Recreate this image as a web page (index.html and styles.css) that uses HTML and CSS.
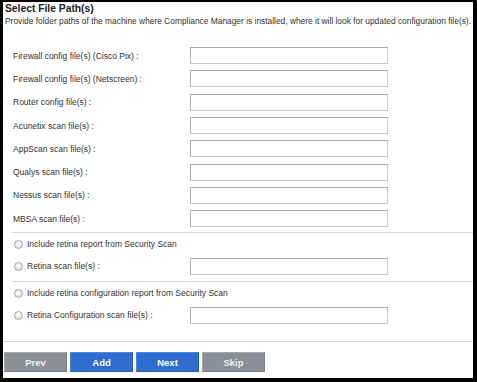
FILE: index.html
```html
<!DOCTYPE html>
<html lang="en">
<head>
  <meta charset="UTF-8" />
  <title>Select File Path(s)</title>
  <link rel="stylesheet" href="styles.css">
</head>
<body>

  <div class="frame">
    <div class="header">
      <h1>Select File Path(s)</h1>
      <p>Provide folder paths of the machine where Compliance Manager is installed, where it will look for updated configuration file(s).</p>
    </div>

    <div class="fields">
      <div class="row"><label for="f1">Firewall config file(s) (Cisco Pix) :</label><input type="text" id="f1" /></div>
      <div class="row"><label for="f2">Firewall config file(s) (Netscreen) :</label><input type="text" id="f2" /></div>
      <div class="row"><label for="f3">Router config file(s) :</label><input type="text" id="f3" /></div>
      <div class="row"><label for="f4">Acunetix scan file(s) :</label><input type="text" id="f4" /></div>
      <div class="row"><label for="f5">AppScan scan file(s) :</label><input type="text" id="f5" /></div>
      <div class="row"><label for="f6">Qualys scan file(s) :</label><input type="text" id="f6" /></div>
      <div class="row"><label for="f7">Nessus scan file(s) :</label><input type="text" id="f7" /></div>
      <div class="row"><label for="f8">MBSA scan file(s) :</label><input type="text" id="f8" /></div>
    </div>

    <div class="divider"></div>

    <div class="fields">
      <div class="row small"><label class="choice wide"><input type="radio" name="retina" /> Include retina report from Security Scan</label></div>
      <div class="row small"><label class="choice"><input type="radio" name="retina" /> Retina scan file(s) :</label><input type="text" /></div>
    </div>

    <div class="divider second"></div>

    <div class="fields">
      <div class="row small"><label class="choice wide"><input type="radio" name="retina-config" /> Include retina configuration report from Security Scan</label></div>
      <div class="row small"><label class="choice"><input type="radio" name="retina-config" /> Retina Configuration scan file(s) :</label><input type="text" /></div>
    </div>

    <div class="footer">
      <button type="button" class="gray">Prev</button>
      <button type="button" class="blue">Add</button>
      <button type="button" class="blue">Next</button>
      <button type="button" class="gray">Skip</button>
    </div>
  </div>

</body>
</html>
```

FILE: styles.css
```css
body {
  margin: 0;
  font-family: "Liberation Sans", Arial, sans-serif;
  background-color: #000;
}

.frame {
  width: 477px;
  height: 382px;
  box-sizing: border-box;
  border-style: solid;
  border-color: #000;
  border-width: 2px 4px 4px 3px;
  background-color: #fff;
  color: #333;
}

.header {
  padding: 0 2px;
}

.header h1 {
  margin: 0;
  font-size: 10.3px;
  line-height: 14px;
  font-weight: bold;
  color: #222;
}

.header p {
  margin: 0;
  font-size: 8.4px;
  line-height: 11px;
  white-space: nowrap;
}

.fields {
  padding-left: 10px;
}

.header + .fields {
  margin-top: 17px;
}

.row {
  display: flex;
  align-items: center;
  height: 23.3px;
  font-size: 8.5px;
}

.row.small {
  height: 22px;
}

.row label {
  width: 177px;
  flex-shrink: 0;
  white-space: nowrap;
}

.row label.wide {
  width: auto;
}

.row input[type="text"] {
  width: 198px;
  height: 17px;
  box-sizing: border-box;
  margin: 0;
  border: 1px solid #c8c8c8;
  border-top-color: #aaa;
  border-left-color: #b4b4b4;
  background-color: #fff;
}

.choice {
  display: flex;
  align-items: center;
  gap: 4px;
}

.choice input[type="radio"] {
  appearance: none;
  flex-shrink: 0;
  width: 9px;
  height: 9px;
  margin: 0 0 0 1px;
  border: 1px solid #a4a4a4;
  border-radius: 50%;
  background: radial-gradient(circle at 40% 35%, #fff 0%, #e6e6e6 60%, #cfcfcf 100%);
}

.divider {
  height: 1px;
  margin: 2px 0 0 9px;
  background-color: #d8d8d8;
}

.divider.second {
  margin-top: 4px;
}

.footer {
  margin-top: 15px;
  border-top: 1px solid #d8d8d8;
  padding: 10px 0 0 1px;
  display: flex;
  gap: 3px;
}

.footer button {
  width: 63px;
  height: 20px;
  margin: 0;
  padding: 0;
  border: 1px solid;
  font-family: inherit;
  font-size: 9.5px;
  font-weight: bold;
  color: #fff;
  cursor: pointer;
}

.footer button.gray {
  background-color: #8b9097;
  border-color: #a3a7ad #7c8188 #7c8188 #a3a7ad;
  color: #eef0f2;
}

.footer button.blue {
  background-color: #2f6ed0;
  border-color: #4c86dc #2760bb #2760bb #4c86dc;
}
```
